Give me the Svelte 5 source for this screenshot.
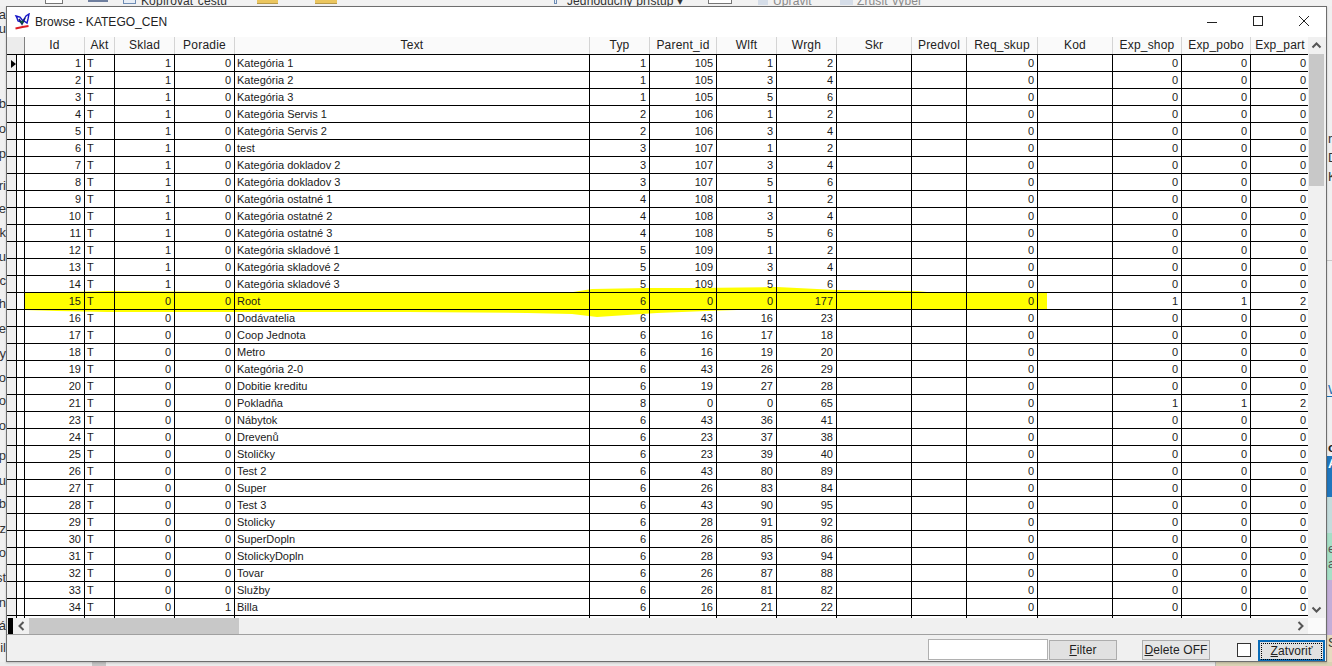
<script>
	const header = ["Id", "Akt", "Sklad", "Poradie", "Text", "Typ", "Parent_id", "Wlft", "Wrgh", "Skr", "Predvol", "Req_skup", "Kod", "Exp_shop", "Exp_pobo", "Exp_part"];

	// id, sklad, poradie, text, typ, parent, wlft, wrgh, exp columns
	const rows = [
		[1, 1, 0, "Kategória 1", 1, 105, 1, 2],
		[2, 1, 0, "Kategória 2", 1, 105, 3, 4],
		[3, 1, 0, "Kategória 3", 1, 105, 5, 6],
		[4, 1, 0, "Kategória Servis 1", 2, 106, 1, 2],
		[5, 1, 0, "Kategória Servis 2", 2, 106, 3, 4],
		[6, 1, 0, "test", 3, 107, 1, 2],
		[7, 1, 0, "Kategória dokladov 2", 3, 107, 3, 4],
		[8, 1, 0, "Kategória dokladov 3", 3, 107, 5, 6],
		[9, 1, 0, "Kategória ostatné 1", 4, 108, 1, 2],
		[10, 1, 0, "Kategória ostatné 2", 4, 108, 3, 4],
		[11, 1, 0, "Kategória ostatné 3", 4, 108, 5, 6],
		[12, 1, 0, "Kategória skladové 1", 5, 109, 1, 2],
		[13, 1, 0, "Kategória skladové 2", 5, 109, 3, 4],
		[14, 1, 0, "Kategória skladové 3", 5, 109, 5, 6],
		[15, 0, 0, "Root", 6, 0, 0, 177, [1, 1, 2]],
		[16, 0, 0, "Dodávatelia", 6, 43, 16, 23],
		[17, 0, 0, "Coop Jednota", 6, 16, 17, 18],
		[18, 0, 0, "Metro", 6, 16, 19, 20],
		[19, 0, 0, "Kategória 2-0", 6, 43, 26, 29],
		[20, 0, 0, "Dobitie kreditu", 6, 19, 27, 28],
		[21, 0, 0, "Pokladňa", 8, 0, 0, 65, [1, 1, 2]],
		[23, 0, 0, "Nábytok", 6, 43, 36, 41],
		[24, 0, 0, "Drevenů", 6, 23, 37, 38],
		[25, 0, 0, "Stoličky", 6, 23, 39, 40],
		[26, 0, 0, "Test 2", 6, 43, 80, 89],
		[27, 0, 0, "Super", 6, 26, 83, 84],
		[28, 0, 0, "Test 3", 6, 43, 90, 95],
		[29, 0, 0, "Stolicky", 6, 28, 91, 92],
		[30, 0, 0, "SuperDopln", 6, 26, 85, 86],
		[31, 0, 0, "StolickyDopln", 6, 28, 93, 94],
		[32, 0, 0, "Tovar", 6, 26, 87, 88],
		[33, 0, 0, "Služby", 6, 26, 81, 82],
		[34, 0, 1, "Billa", 6, 16, 21, 22]
	];

	// letters of the window behind, cut off by this one
	const leftScraps = [
		["a", 7], ["u", 21], ["b", 96], ["o", 121], ["p", 146], ["ri", 178], ["e", 201], ["k", 225], ["u", 249],
		["rc", 273], ["h", 296], ["e", 321], ["y", 346], ["o", 370], ["o", 393], ["o", 418], ["p", 448], ["u", 473],
		["b", 496], ["áz", 521], ["o", 545], ["st", 570], ["n", 595], ["á", 618], ["il", 640]
	];
	const rightScraps = [["r", 131], ["D", 150], ["K", 169]];

	const ribbon = [
		{ x: 45, w: 16, kind: "box" },
		{ x: 88, w: 20, kind: "slate" },
		{ x: 123, w: 13, kind: "path" },
		{ x: 141, text: "Kopírovať cestu" },
		{ x: 257, w: 21, kind: "gold" },
		{ x: 315, w: 22, kind: "gold" },
		{ x: 554, w: 3, kind: "path" },
		{ x: 567, text: "Jednoduchý prístup ▾" },
		{ x: 708, w: 22, kind: "box" },
		{ x: 758, w: 10, kind: "faint" },
		{ x: 773, text: "Upraviť", muted: true },
		{ x: 840, w: 13, kind: "faint" },
		{ x: 857, text: "Zrušiť výber", muted: true }
	];
</script>

<div class="desk">
	<div class="ribbon">
		{#each ribbon as item}
			{#if item.text}
				<span class="ribbon-text" class:muted={item.muted} style="left:{item.x}px">{item.text}</span>
			{:else}
				<span class="ribbon-icon {item.kind}" style="left:{item.x}px;width:{item.w}px"></span>
			{/if}
		{/each}
	</div>

	{#each leftScraps as [letters, top]}
		<span class="scrap scrap-left" style="top:{top}px">{letters}</span>
	{/each}
	{#each rightScraps as [letters, top]}
		<span class="scrap scrap-right" style="top:{top}px">{letters}</span>
	{/each}

	<div class="right-strip">
		<div class="link">W</div>
		<div class="strong">o</div>
		<div class="tile blue">A</div>
		<div class="tile pale"></div>
		<div class="tile green">e<br />a</div>
		<div class="tile purple"></div>
		<div class="tile beige">S</div>
	</div>
	<div class="bottom-strip">
		<span class="stub"></span>
		<span class="beige-block"></span>
	</div>

	<div class="window">
		<div class="titlebar">
			<svg class="app-icon" width="17" height="17" viewBox="0 0 17 17">
				<path d="M2 3l4 1 3 4 3-5 3-2-1 5-1 4-3-2-3 1-3-1-1-3z" fill="none" stroke="#1616c8" stroke-width="1.4" />
				<path d="M5 6l3 5 3-6" fill="none" stroke="#13206e" stroke-width="1.6" />
				<circle cx="8" cy="9" r="1.6" fill="#0c5b3a" />
				<path d="M1.5 15.5l7-1.5 6-1" fill="none" stroke="#dc1c24" stroke-width="1.8" />
			</svg>
			<span class="title">Browse - KATEGO_CEN</span>
			<div class="controls">
				<svg width="46" height="30" viewBox="0 0 46 30"><path d="M18 15.5h10" stroke="#222" fill="none" /></svg>
				<svg width="46" height="30" viewBox="0 0 46 30"><rect x="18.5" y="9.5" width="9" height="9" stroke="#222" fill="none" /></svg>
				<svg width="46" height="30" viewBox="0 0 46 30"><path d="M18 9l10 10M28 9L18 19" stroke="#222" fill="none" /></svg>
			</div>
		</div>

		<div class="grid-area">
			<div class="grid">
				<div class="row head">
					<div class="corner"></div>
					{#each header as name}
						<div class="hcell">{name}</div>
					{/each}
				</div>
				<div class="body">
					<svg class="marker" width="1040" height="40" viewBox="0 0 1040 40">
						<path
							d="M17 5 L60 4 L100 3 L230 4 L420 5 L560 5 L585 1 L640 0 L690 0 L770 -1 L830 2 L910 3 L930 5 L1040 5 L1040 21 L1000 22 L960 21 L860 21 L780 21 L730 22 L700 23 L650 25 L590 29 L565 26 L520 25 L400 24 L230 24 L100 24 L50 23 L17 22 Z"
							fill="#ffff00"
						/>
					</svg>
					{#each rows as r, i}
						<div class="row">
							<div class="ind">
								{#if i === 0}<span class="pointer"></span>{/if}
							</div>
							<div class="gap"></div>
							<div class="cell num">{r[0]}</div>
							<div class="cell">T</div>
							<div class="cell num">{r[1]}</div>
							<div class="cell num">{r[2]}</div>
							<div class="cell">{r[3]}</div>
							<div class="cell num">{r[4]}</div>
							<div class="cell num">{r[5]}</div>
							<div class="cell num">{r[6]}</div>
							<div class="cell num">{r[7]}</div>
							<div class="cell"></div>
							<div class="cell"></div>
							<div class="cell num">0</div>
							<div class="cell"></div>
							<div class="cell num">{r[8] ? r[8][0] : 0}</div>
							<div class="cell num">{r[8] ? r[8][1] : 0}</div>
							<div class="cell num last">{r[8] ? r[8][2] : 0}</div>
						</div>
					{/each}
					<div class="row">
						<div class="ind"></div>
						<div class="gap"></div>
						<div class="cell"></div>
						<div class="cell"></div>
						<div class="cell"></div>
						<div class="cell"></div>
						<div class="cell">Š</div>
						<div class="cell"></div>
						<div class="cell"></div>
						<div class="cell"></div>
						<div class="cell"></div>
						<div class="cell"></div>
						<div class="cell"></div>
						<div class="cell"></div>
						<div class="cell"></div>
						<div class="cell"></div>
						<div class="cell"></div>
						<div class="cell last"></div>
					</div>
				</div>
			</div>
			<div class="vscroll">
				<svg class="arrow" width="17" height="17" viewBox="0 0 17 17"><path d="M4.5 10.5l4-4 4 4" fill="none" stroke="#555" stroke-width="2" /></svg>
				<div class="vthumb"></div>
				<div class="spacer"></div>
				<svg class="arrow" width="17" height="17" viewBox="0 0 17 17"><path d="M4.5 6.5l4 4 4-4" fill="none" stroke="#555" stroke-width="2" /></svg>
			</div>
		</div>

		<div class="hscroll-row">
			<div class="hscroll">
				<span class="black-mark"></span>
				<svg class="arrow-h" width="14" height="16" viewBox="0 0 14 16"><path d="M9.5 4l-4 4 4 4" fill="none" stroke="#555" stroke-width="2" /></svg>
				<div class="hthumb"></div>
				<div class="spacer"></div>
				<svg class="arrow-h" width="14" height="16" viewBox="0 0 14 16"><path d="M4.5 4l4 4-4 4" fill="none" stroke="#555" stroke-width="2" /></svg>
			</div>
			<div class="scroll-corner"></div>
		</div>

		<div class="footer">
			<input class="filter-input" type="text" />
			<button class="btn filter"><u>F</u>ilter</button>
			<button class="btn delete"><u>D</u>elete OFF</button>
			<span class="check"></span>
			<button class="btn close"><span class="focus"><u>Z</u>atvoriť</span></button>
		</div>
	</div>
</div>

<style>
	:global(body) {
		margin: 0;
		background: #f0f0f0;
	}

	.desk {
		position: relative;
		width: 1332px;
		height: 666px;
		overflow: hidden;
		background: #f0f0f0;
		font-family: "Liberation Sans", Arial, sans-serif;
		color: #111;
	}

	.ribbon {
		position: absolute;
		inset: 0 0 auto 0;
		height: 6px;
		background: #f2f2f2;
	}
	.ribbon-text {
		position: absolute;
		top: -6px;
		font-size: 12px;
		line-height: 14px;
		letter-spacing: 0.1px;
		color: #333;
		white-space: nowrap;
	}
	.ribbon-text.muted {
		color: #8a8a8a;
	}
	.ribbon-icon {
		position: absolute;
		top: 0;
		height: 3px;
	}
	.box {
		background: #fff;
		border: 1px solid #777;
		border-top: 0;
	}
	.slate {
		height: 2px;
		background: #6f7f9f;
	}
	.path {
		height: 4px;
		box-sizing: border-box;
		border: 1px solid #6f8db5;
		border-top: 0;
		background: #e8eef6;
	}
	.faint {
		height: 5px;
		background: #d5dde8;
	}
	.gold {
		height: 3px;
		background: #ebc65f;
		border-bottom: 1px solid #b79a4c;
	}

	.scrap {
		position: absolute;
		font-size: 13px;
		line-height: 15px;
		color: #333;
		white-space: nowrap;
	}
	.scrap-left {
		right: 1326px;
	}
	.scrap-right {
		left: 1328px;
	}

	.right-strip {
		position: absolute;
		left: 1327px;
		top: 260px;
		width: 5px;
		height: 406px;
		border-top: 1px solid #c8c8c8;
		overflow: hidden;
		font-size: 13px;
		line-height: 15px;
	}
	.link {
		margin: 121px 0 0 0;
		padding-left: 1px;
		color: #1a6fb5;
		border-bottom: 1px solid #1a6fb5;
		height: 14px;
	}
	.strong {
		margin: 43px 0 0 0;
		padding-left: 1px;
		height: 16px;
		font-weight: bold;
		color: #222;
	}
	.tile {
		width: 5px;
		padding-left: 1px;
		box-sizing: border-box;
	}
	.blue {
		height: 41px;
		background: #1f76bd;
		color: #fff;
		font-weight: bold;
	}
	.pale {
		height: 36px;
		background: #c4dcdc;
	}
	.green {
		height: 47px;
		background: #a6dfc6;
		color: #555;
		padding-top: 8px;
	}
	.purple {
		height: 55px;
		background: #c3aed8;
	}
	.beige {
		height: 31px;
		background: #e6dcc0;
		color: #333;
	}

	.bottom-strip {
		position: absolute;
		left: 0;
		right: 0;
		top: 662px;
		height: 4px;
		background: #ececec;
	}
	.stub {
		position: absolute;
		left: 92px;
		width: 14px;
		height: 4px;
		background: #c6c6c6;
	}
	.beige-block {
		position: absolute;
		left: 1215px;
		right: 0;
		height: 4px;
		background: #d9d2b4;
		border-left: 1px solid #b8b8b8;
	}

	.window {
		position: absolute;
		left: 6px;
		top: 6px;
		width: 1321px;
		height: 656px;
		box-sizing: border-box;
		border: 1px solid #6e6e6e;
		background: #f0f0f0;
		display: flex;
		flex-direction: column;
		box-shadow: 0 1px 2px rgba(0, 0, 0, 0.2);
	}

	.titlebar {
		height: 30px;
		flex: none;
		background: #fff;
		display: flex;
		align-items: center;
		font-size: 12px;
	}
	.app-icon {
		margin-left: 7px;
		margin-top: -1px;
	}
	.title {
		margin-left: 4px;
		letter-spacing: 0.02px;
		color: #222;
	}
	.controls {
		margin-left: auto;
		display: flex;
		margin-right: -1px;
	}

	.grid-area {
		height: 581px;
		flex: none;
		display: flex;
		overflow: hidden;
	}
	.grid {
		width: 1301px;
		background: #fff;
		overflow: hidden;
	}

	.row {
		display: grid;
		grid-template-columns: 10px 8px 60px 30px 60px 60px 355px 60px 67px 60px 60px 75px 55px 71px 75px 69px 69px 58px;
		height: 17px;
		box-sizing: border-box;
		border-bottom: 1px solid #000;
		position: relative;
	}
	.head {
		grid-template-columns: 18px 60px 30px 60px 60px 355px 60px 67px 60px 60px 75px 55px 71px 75px 69px 69px 58px;
		height: 18px;
		background: #fafafa;
	}
	.corner {
		background: #ececec;
		border-right: 1px solid #808080;
	}
	.hcell {
		border-right: 1px solid #d4d4d4;
		text-align: center;
		font-size: 12px;
		line-height: 17px;
		letter-spacing: 0.2px;
		color: #222;
		white-space: nowrap;
	}
	.hcell:last-child {
		border-right: 0;
	}

	.body {
		position: relative;
	}
	.marker {
		position: absolute;
		left: 0;
		top: 233px;
		overflow: visible;
		pointer-events: none;
	}
	.ind {
		background: #f0f0f0;
		border-right: 1px solid #000;
		position: relative;
	}
	.gap {
		border-right: 1px solid #000;
	}
	.pointer {
		position: absolute;
		left: 4px;
		top: 5px;
		width: 0;
		height: 0;
		border-left: 5px solid #000;
		border-top: 4px solid transparent;
		border-bottom: 4px solid transparent;
	}
	.cell {
		border-right: 1px solid #000;
		font-size: 11px;
		line-height: 16px;
		padding: 0 2px;
		box-sizing: border-box;
		white-space: nowrap;
		overflow: hidden;
		color: #1a1a1a;
	}
	.num {
		text-align: right;
		padding-right: 3px;
	}
	.last {
		border-right: 0;
	}

	.vscroll {
		width: 17px;
		background: #f0f0f0;
		display: flex;
		flex-direction: column;
	}
	.arrow {
		flex: none;
	}
	.vthumb {
		flex: none;
		width: 15px;
		height: 132px;
		margin: 0 1px;
		background: #c8c8c8;
	}
	.spacer {
		flex: 1;
	}

	.hscroll-row {
		height: 16px;
		flex: none;
		display: flex;
	}
	.hscroll {
		width: 1301px;
		display: flex;
		align-items: stretch;
		background: #f0f0f0;
	}
	.black-mark {
		width: 5px;
		background: #000;
		margin-left: 1px;
		flex: none;
	}
	.arrow-h {
		flex: none;
		margin-left: 1px;
	}
	.hthumb {
		flex: none;
		width: 210px;
		margin-left: 1px;
		background: #c8c8c8;
	}
	.scroll-corner {
		width: 17px;
		background: #fafafa;
	}

	.footer {
		flex: 1;
		border-top: 1px solid #a0a0a0;
		display: flex;
		align-items: flex-start;
		padding-left: 921px;
		box-sizing: border-box;
	}
	.filter-input {
		box-sizing: border-box;
		width: 120px;
		height: 21px;
		margin: 4px 0 0 0;
		padding: 0;
		background: #fff;
		border: 1px solid #b0b0b0;
	}
	.btn {
		box-sizing: border-box;
		height: 20px;
		margin: 5px 0 0 0;
		padding: 0;
		font-family: inherit;
		font-size: 12px;
		color: #222;
		letter-spacing: 0.1px;
		background: #e1e1e1;
		border: 1px solid #adadad;
		border-radius: 0;
	}
	.filter {
		width: 68px;
		margin-left: 1px;
	}
	.delete {
		width: 68px;
		margin-left: 25px;
		background: #e6e6e6;
	}
	.check {
		box-sizing: border-box;
		width: 14px;
		height: 14px;
		margin: 8px 0 0 27px;
		background: #fff;
		border: 1px solid #333;
	}
	.close {
		width: 67px;
		height: 21px;
		margin: 5px 0 0 7px;
		border: 2px solid #0a6cb8;
		padding: 1px;
	}
	.focus {
		display: block;
		height: 15px;
		line-height: 14px;
		border: 1px dotted #000;
	}
</style>
